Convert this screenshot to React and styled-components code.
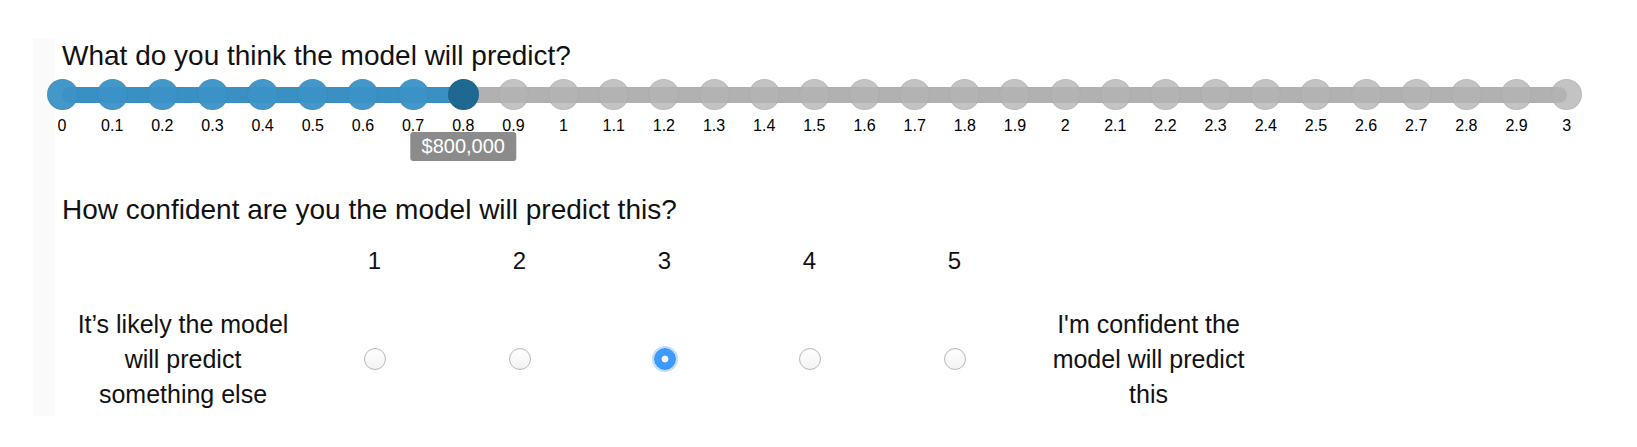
import React, { useState } from 'react';
import styled, { createGlobalStyle } from 'styled-components';

const GlobalStyle = createGlobalStyle`
  body {
    margin: 0;
    background: #fff;
    font-family: 'Liberation Sans', Arial, Helvetica, sans-serif;
    color: #111;
  }
`;

const Page = styled.div`
  padding: 40px 0 0 33px;
`;

const Panel = styled.section`
  margin-top: -2px;
  padding: 2px 0 4px 29px;
  background: linear-gradient(to right, #fafafa 0, #fafafa 22px, #fff 22px);
`;

const Question = styled.h2`
  margin: ${props => props.$top || 0}px 0 0;
  font-size: 28px;
  font-weight: 400;
  line-height: 32px;
  color: #111;
`;

// slider

const Slider = styled.div`
  position: relative;
  width: 1536px;
  margin: 7px 0 0 -15.5px;
`;

const Track = styled.div`
  position: absolute;
  top: 7.5px;
  left: 15.5px;
  right: 15.5px;
  height: 16px;
  border-radius: 8px;
  background: #b1b1b1;
  overflow: hidden;
`;

const TrackFill = styled.div`
  height: 100%;
  background: #3a8fc3;
`;

const Ticks = styled.div`
  position: relative;
  display: flex;
  justify-content: space-between;
`;

const Tick = styled.div`
  position: relative;
  width: 31px;
  display: flex;
  flex-direction: column;
  align-items: center;
  cursor: pointer;
`;

const DOT_COLORS = {
  filled: 'rgba(58, 146, 198, 0.95)',
  active: '#1f6891',
  empty: 'rgba(180, 180, 180, 0.8)',
};

const Dot = styled.span`
  position: relative;
  z-index: 1;
  width: 31px;
  height: 31px;
  border-radius: 50%;
  background: ${props => DOT_COLORS[props.$state]};
  box-shadow: inset 0 0 0 1px rgba(0, 0, 0, 0.04);
`;

const TickLabel = styled.span`
  position: relative;
  z-index: 3;
  margin-top: 7px;
  font-size: 16px;
  line-height: 18px;
  white-space: nowrap;
  color: #000;
`;

const Tooltip = styled.span`
  position: absolute;
  z-index: 2;
  top: 53px;
  left: 50%;
  transform: translateX(-50%);
  padding: 0 11px;
  border-radius: 3px;
  background: #8b8b8b;
  color: #fff;
  font-size: 20px;
  line-height: 29px;
  white-space: nowrap;
`;

// confidence scale

const Scale = styled.div`
  display: grid;
  grid-template-columns: 240px repeat(5, 145px) 223px;
  row-gap: 31px;
  align-items: center;
  margin-top: 20px;
`;

const ScaleNumber = styled.div`
  font-size: 24px;
  line-height: 30px;
  text-align: center;
`;

const SideLabel = styled.div`
  padding: ${props => (props.$side === 'left' ? '0 9px 0 11px' : '0 0 0 20px')};
  font-size: 25px;
  line-height: 35px;
  text-align: center;
`;

const RadioCell = styled.label`
  display: flex;
  justify-content: center;
  cursor: pointer;
`;

const Radio = styled.input`
  appearance: none;
  margin: 0;
  width: 22px;
  height: 22px;
  border-radius: 50%;
  border: 1px solid #b9b9b9;
  background: linear-gradient(#ffffff, #f3f3f3);
  box-shadow: inset 0 1px 1px rgba(0, 0, 0, 0.04);
  cursor: pointer;

  &:checked {
    border-color: #3a90ee;
    background: radial-gradient(circle at center, #fff 0 3px, #3d9bfd 3.8px);
    box-shadow: 0 0 0 2px rgba(80, 160, 252, 0.35);
  }
`;

const formatTick = i => (i % 10 === 0 ? `${i / 10}` : `${Math.floor(i / 10)}.${i % 10}`);

const formatMoney = i => `$${(i * 100000).toLocaleString('en-US')}`;

const STEPS = 30;

const App = () => {
  const [prediction, setPrediction] = useState(8);
  const [confidence, setConfidence] = useState(3);

  return (
    <Page>
      <GlobalStyle />
      <Panel>
        <Question>What do you think the model will predict?</Question>
        <Slider>
          <Track>
            <TrackFill style={{ width: `${(prediction / STEPS) * 100}%` }} />
          </Track>
          <Ticks>
            {Array.from({ length: STEPS + 1 }, (_, i) => {
              let state = 'empty';
              if (i < prediction) state = 'filled';
              if (i === prediction) state = 'active';
              return (
                <Tick key={i} onClick={() => setPrediction(i)}>
                  <Dot $state={state} />
                  <TickLabel>{formatTick(i)}</TickLabel>
                  {i === prediction && <Tooltip>{formatMoney(i)}</Tooltip>}
                </Tick>
              );
            })}
          </Ticks>
        </Slider>

        <Question $top={58.5}>How confident are you the model will predict this?</Question>
        <Scale>
          <div />
          {[1, 2, 3, 4, 5].map(n => (
            <ScaleNumber key={n}>{n}</ScaleNumber>
          ))}
          <div />

          <SideLabel $side="left">It’s likely the model will predict something else</SideLabel>
          {[1, 2, 3, 4, 5].map(n => (
            <RadioCell key={n}>
              <Radio
                type="radio"
                name="confidence"
                value={n}
                checked={confidence === n}
                onChange={() => setConfidence(n)}
              />
            </RadioCell>
          ))}
          <SideLabel $side="right">I'm confident the model will predict this</SideLabel>
        </Scale>
      </Panel>
    </Page>
  );
};

export default App;
